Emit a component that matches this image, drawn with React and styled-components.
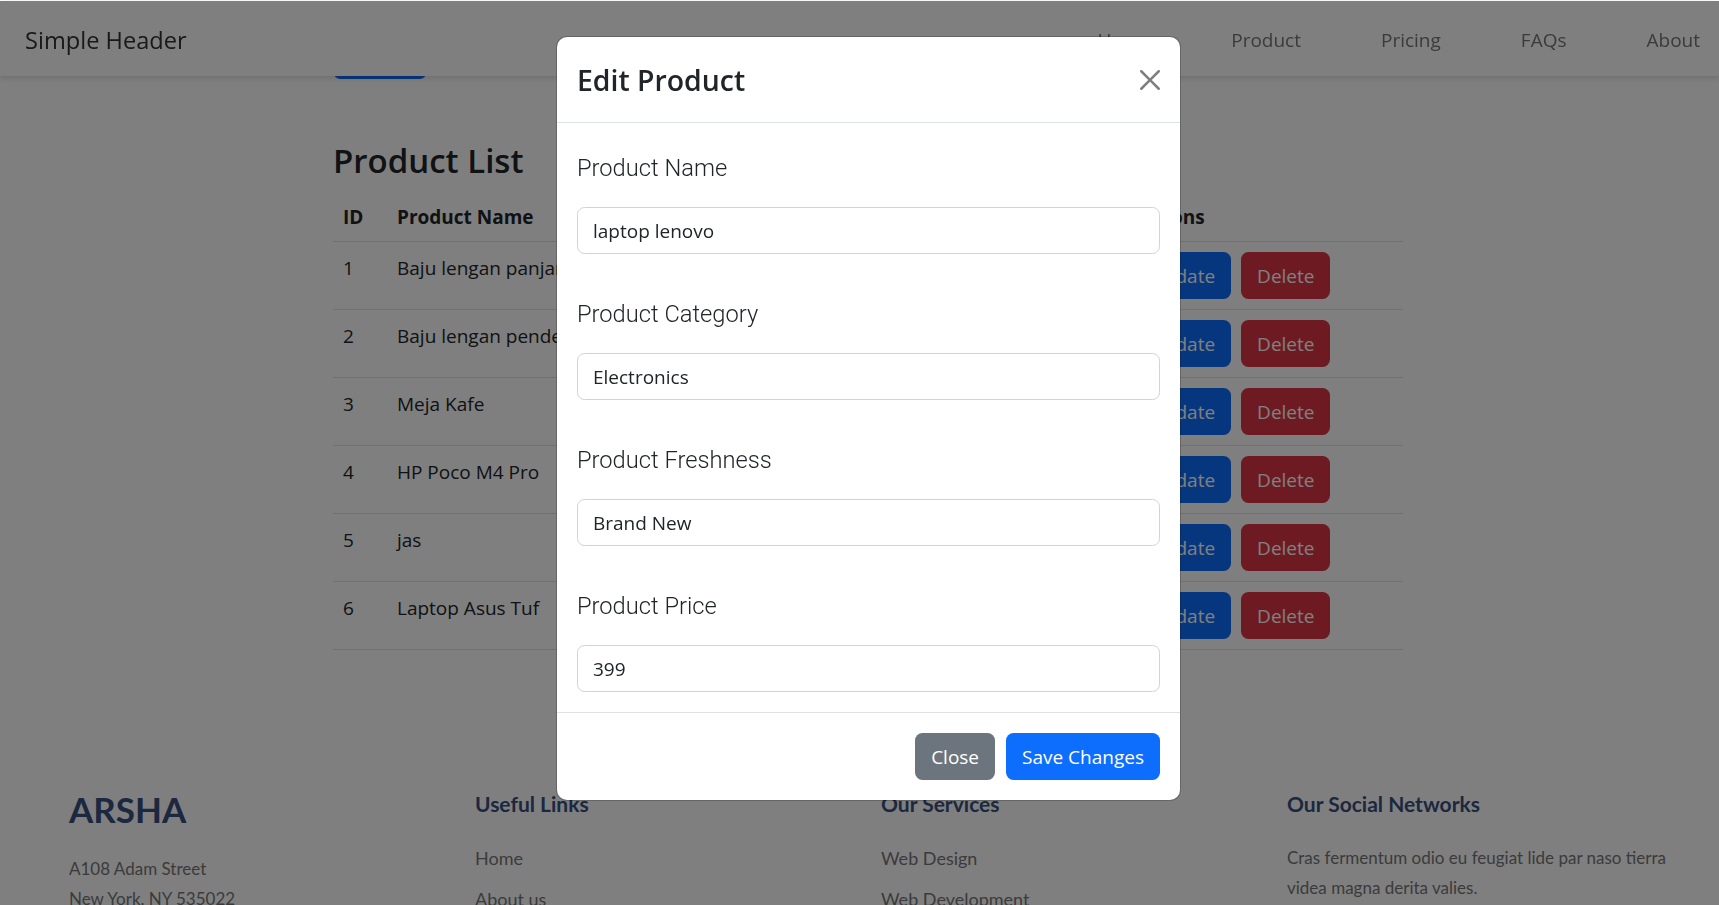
import React from "react"
import styled, { createGlobalStyle } from "styled-components"

const products = [
    { id: 1, name: "Baju lengan panjang" },
    { id: 2, name: "Baju lengan pendek" },
    { id: 3, name: "Meja Kafe" },
    { id: 4, name: "HP Poco M4 Pro" },
    { id: 5, name: "jas" },
    { id: 6, name: "Laptop Asus Tuf" },
]

const fields = [
    { label: "Product Name", value: "laptop lenovo" },
    { label: "Product Category", value: "Electronics" },
    { label: "Product Freshness", value: "Brand New" },
    { label: "Product Price", value: "399" },
]

const footerColumns = [
    { title: "Useful Links", links: ["Home", "About us"] },
    { title: "Our Services", links: ["Web Design", "Web Development"] },
]

export default function App() {
    return (
        <>
            <GlobalStyle />
            <Header>
                <Brand>Simple Header</Brand>
                <Nav>
                    <NavLink>Home</NavLink>
                    <NavLink>Product</NavLink>
                    <NavLink>Pricing</NavLink>
                    <NavLink>FAQs</NavLink>
                    <NavLink>About</NavLink>
                </Nav>
            </Header>
            <Main>
                <AddButton>Add</AddButton>
                <Title>Product List</Title>
                <Table>
                    <colgroup>
                        <col style={{ width: 54 }} />
                        <col style={{ width: 737 }} />
                        <col />
                    </colgroup>
                    <thead>
                        <tr>
                            <Th>ID</Th>
                            <Th>Product Name</Th>
                            <Th>Actions</Th>
                        </tr>
                    </thead>
                    <tbody>
                        {products.map((p) => (
                            <tr key={p.id}>
                                <Td>{p.id}</Td>
                                <Td>{p.name}</Td>
                                <ActionCell>
                                    <RowButton $color="#0d6efd">Update</RowButton>
                                    <RowButton $color="#dc3545">Delete</RowButton>
                                </ActionCell>
                            </tr>
                        ))}
                    </tbody>
                </Table>
            </Main>
            <Footer>
                <FooterColumn>
                    <Logo>ARSHA</Logo>
                    <Address>
                        A108 Adam Street
                        <br />
                        New York, NY 535022
                    </Address>
                </FooterColumn>
                {footerColumns.map((col) => (
                    <FooterColumn key={col.title}>
                        <FooterTitle>{col.title}</FooterTitle>
                        {col.links.map((l) => (
                            <FooterLink key={l}>{l}</FooterLink>
                        ))}
                    </FooterColumn>
                ))}
                <FooterColumn>
                    <FooterTitle>Our Social Networks</FooterTitle>
                    <FooterText>Cras fermentum odio eu feugiat lide par naso tierra videa magna derita valies.</FooterText>
                </FooterColumn>
            </Footer>
            <Backdrop />
            <Modal>
                <ModalHeader>
                    <ModalTitle>Edit Product</ModalTitle>
                    <CloseIcon viewBox="0 0 16 16" aria-label="Close">
                        <path d="M.293.293a1 1 0 0 1 1.414 0L8 6.586 14.293.293a1 1 0 1 1 1.414 1.414L9.414 8l6.293 6.293a1 1 0 0 1-1.414 1.414L8 9.414l-6.293 6.293a1 1 0 0 1-1.414-1.414L6.586 8 .293 1.707a1 1 0 0 1 0-1.414z" />
                    </CloseIcon>
                </ModalHeader>
                <ModalBody>
                    {fields.map((f) => (
                        <Field key={f.label}>
                            <Label>{f.label}</Label>
                            <Input defaultValue={f.value} />
                        </Field>
                    ))}
                </ModalBody>
                <ModalFooter>
                    <FooterButton $color="#6c757d">Close</FooterButton>
                    <FooterButton $color="#0d6efd">Save Changes</FooterButton>
                </ModalFooter>
            </Modal>
        </>
    )
}

const GlobalStyle = createGlobalStyle`
    html, body {
        margin: 0;
        height: 905px;
        overflow: hidden;
        background: #fff;
    }
    * {
        box-sizing: border-box;
    }
    body {
        font-family: "Open Sans", "Noto Sans", sans-serif;
        font-stretch: 90%;
        font-size: 19px;
        color: #212529;
    }
`

const Header = styled.header`
    position: fixed;
    top: 1px;
    left: 0;
    right: 0;
    height: 75px;
    display: flex;
    justify-content: space-between;
    align-items: center;
    padding: 2px 0 0 25px;
    background: #fff;
    box-shadow: 0 2px 6px rgba(0, 0, 0, 0.15);
    z-index: 2;
`

const Brand = styled.div`
    font-size: 23.6px;
    color: #333;
`

const Nav = styled.nav`
    display: flex;
    padding-right: 19px;
    gap: 80px;
`

const NavLink = styled.a`
    font-size: 19px;
    color: #777;
`

const Main = styled.main`
    width: 1070px;
    margin-left: 333px;
    padding-top: 32px;
`

const AddButton = styled.button`
    display: block;
    width: 94px;
    height: 47px;
    border: none;
    border-radius: 7.5px;
    background: #0d6efd;
    color: #fff;
    font: inherit;
`

const Title = styled.h2`
    margin: 55px 0 0;
    font-size: 33px;
    font-weight: 600;
    line-height: 54px;
`

const Table = styled.table`
    width: 100%;
    table-layout: fixed;
    border-collapse: collapse;
    margin-top: 9px;
`

const Th = styled.th`
    height: 44px;
    padding: 0 10px 4px;
    text-align: left;
    font-weight: 700;
    border-bottom: 1px solid #dee2e6;
`

const Td = styled.td`
    height: 68px;
    padding: 11px 10px 9px;
    vertical-align: top;
    line-height: 30px;
    white-space: nowrap;
    border-bottom: 1px solid #dee2e6;
`

const ActionCell = styled(Td)`
    padding: 10px;
`

const RowButton = styled.button`
    height: 47px;
    padding: 2px 16px 0;
    margin-right: 10px;
    border: none;
    border-radius: 7.5px;
    background: ${(p) => p.$color};
    color: #fff;
    font: inherit;
`

const Footer = styled.footer`
    display: grid;
    grid-template-columns: repeat(4, 406px);
    margin: 139px 0 0 69px;
    font-family: Lato, sans-serif;
`

const FooterColumn = styled.div`
    display: flex;
    flex-direction: column;
`

const Logo = styled.div`
    font-size: 35px;
    font-weight: 700;
    line-height: 40px;
    color: #37517e;
`

const Address = styled.p`
    margin: 25px 0 0;
    font-size: 17px;
    line-height: 30px;
    color: #777;
`

const FooterTitle = styled.h4`
    margin: 0 0 19px;
    font-size: 21px;
    font-weight: 700;
    line-height: 30px;
    color: #37517e;
`

const FooterLink = styled.a`
    font-size: 18px;
    line-height: 41px;
    color: #777;
`

const FooterText = styled.p`
    margin: 5px 0 0;
    font-size: 17px;
    line-height: 30px;
    width: 390px;
    color: #777;
`

const Backdrop = styled.div`
    position: fixed;
    inset: 1px 0 0 0;
    background: rgba(0, 0, 0, 0.5);
    z-index: 3;
`

const Modal = styled.div`
    position: fixed;
    top: 37px;
    left: 557px;
    width: 623px;
    height: 763px;
    display: flex;
    flex-direction: column;
    background: #fff;
    border-radius: 10px;
    box-shadow: 0 0 0 1px rgba(0, 0, 0, 0.2);
    z-index: 4;
`

const ModalHeader = styled.div`
    height: 86px;
    flex: none;
    display: flex;
    align-items: center;
    justify-content: space-between;
    padding: 0 20px;
    border-bottom: 1px solid #dee2e6;
`

const ModalTitle = styled.h5`
    margin: 0;
    font-size: 28.4px;
    font-weight: 600;
`

const CloseIcon = styled.svg`
    width: 20px;
    height: 20px;
    fill: #000;
    opacity: 0.5;
`

const ModalBody = styled.div`
    flex: 1;
    display: flex;
    flex-direction: column;
    gap: 42px;
    padding: 27px 20px 20px;
`

const Field = styled.div`
    display: flex;
    flex-direction: column;
    gap: 21px;
`

const Label = styled.label`
    font-family: Roboto, sans-serif;
    font-weight: 300;
    font-size: 23.7px;
    line-height: 36px;
`

const Input = styled.input`
    height: 47px;
    padding: 0 15px;
    border: 1px solid #ced4da;
    border-radius: 7.5px;
    color: #212529;
    font: inherit;
    outline: none;
`

const ModalFooter = styled.div`
    flex: none;
    height: 89px;
    display: flex;
    justify-content: flex-end;
    align-items: center;
    gap: 11px;
    padding: 0 20px 2px;
    border-top: 1px solid #dee2e6;
`

const FooterButton = styled.button`
    height: 47px;
    padding: 2px 16px 0;
    border: none;
    border-radius: 7.5px;
    background: ${(p) => p.$color};
    color: #fff;
    font: inherit;
`
